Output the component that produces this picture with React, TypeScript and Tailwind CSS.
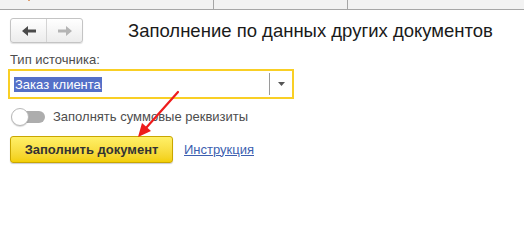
import React from "react";

export default function App() {
  return (
    <div className="relative w-[524px] h-[240px] bg-white overflow-hidden" style={{ fontFamily: '"Liberation Sans", Arial, sans-serif' }}>
      {/* top tab strip */}
      <div className="flex h-[10px] bg-[#f2f2f2] border-b border-[#a6a6a6]">
        <div className="w-[214px] border-r border-[#a6a6a6] relative">
          <span className="absolute left-[28px] top-[-1px] w-[2px] h-[2px] bg-[#e0a070]" />
        </div>
        <div className="w-[134px] border-r border-[#a6a6a6]" />
        <div className="flex-1" />
      </div>

      <div className="pl-[10px]">
        {/* header */}
        <div className="flex items-center mt-[8px] h-[25px]">
          <div className="flex w-[73px] h-[25px] rounded-[3px] border border-[#c4c4c4] bg-gradient-to-b from-white to-[#ececec] shadow-[0_1px_1px_rgba(0,0,0,0.12)]">
            <div className="flex-1 flex items-center justify-center border-r border-[#d4d4d4]">
              <svg width="14" height="10" viewBox="0 0 14 10">
                <path d="M0 5 L6 0 L6 3.5 L14 3.5 L14 6.5 L6 6.5 L6 10 Z" fill="#4a4a4a" />
              </svg>
            </div>
            <div className="flex-1 flex items-center justify-center">
              <svg width="14" height="10" viewBox="0 0 14 10">
                <path d="M14 5 L8 0 L8 3.5 L0 3.5 L0 6.5 L8 6.5 L8 10 Z" fill="#b4b4b4" />
              </svg>
            </div>
          </div>
          <div className="ml-[45px] text-[18.5px] leading-none text-[#1a1a1a] mt-[2px]">Заполнение по данных других документов</div>
        </div>

        {/* label */}
        <div className="mt-[9px] text-[13px] leading-[15px] text-[#4d4d4d]">Тип источника:</div>

        {/* select */}
        <div className="-ml-[2px] mt-[2px] w-[286px] h-[30px] border-2 border-[#f9cf25] flex items-center">
          <div className="flex-1 pl-[4px] flex items-center">
            <span className="bg-[#5470c8] text-white text-[13px] leading-[15px] px-[1px]">Заказ клиента</span>
          </div>
          <div className="w-px h-[22px] bg-[#9a9a9a]" />
          <div className="w-[22px] flex items-center justify-center">
            <svg width="7" height="4" viewBox="0 0 7 4"><path d="M0 0 L7 0 L3.5 4 Z" fill="#555" /></svg>
          </div>
        </div>

        {/* toggle */}
        <div className="flex items-center mt-[9px] h-[18px]">
          <div className="relative w-[35px] h-[18px] ml-[1px]">
            <div className="absolute left-[8px] top-[3px] w-[26px] h-[12px] rounded-full bg-[#adadad]" />
            <div className="absolute left-0 top-0 w-[18px] h-[18px] rounded-full bg-white border border-[#b8b8b8] shadow-[0_1px_1px_rgba(0,0,0,0.15)]" />
          </div>
          <span className="ml-[7px] text-[13px] text-[#4d4d4d]">Заполнять суммовые реквизиты</span>
        </div>

        {/* buttons */}
        <div className="flex items-center mt-[10px]">
          <button className="w-[163px] h-[27px] rounded-[3px] border border-[#c9a600] bg-gradient-to-b from-[#fff066] to-[#f3cf00] shadow-[0_1px_1px_rgba(0,0,0,0.2)] text-[13px] font-bold text-[#333]">
            Заполнить документ
          </button>
          <a className="ml-[11px] text-[13px] text-[#3d5fb0] underline">Инструкция</a>
        </div>
      </div>

      {/* red arrow */}
      <svg className="absolute left-0 top-0 pointer-events-none" width="524" height="240">
        <line x1="178" y1="92" x2="146" y2="128" stroke="#ee1c1c" strokeWidth="2.2" strokeLinecap="round" />
        <path d="M138 137 L142 123 L151 131 Z" fill="#ee1c1c" />
      </svg>
    </div>
  );
}
